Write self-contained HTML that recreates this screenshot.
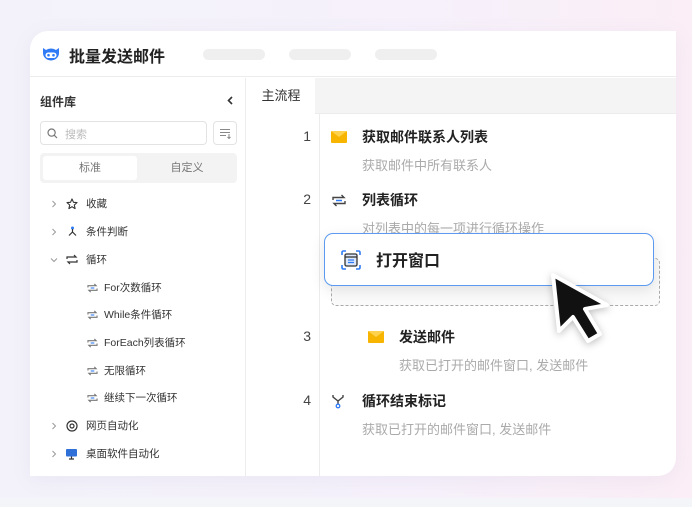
<!DOCTYPE html>
<html><head><meta charset="utf-8">
<style>
*{box-sizing:border-box;margin:0;padding:0}
body{width:692px;height:507px;overflow:hidden;position:relative;font-family:"Liberation Sans","Noto Sans CJK SC",sans-serif;background:linear-gradient(90deg,#f3f2fa 0%,#f6f1fb 60%,#fbeef6 100%)}
.bottom{position:absolute;left:0;top:498px;width:692px;height:9px;background:#f4f5f9}
.card{position:absolute;left:30px;top:31px;width:646px;height:445px;background:#fff;border-radius:18px 0 18px 0;box-shadow:0 4px 20px rgba(120,120,160,.08);overflow:hidden}
.hdr{position:absolute;left:0;top:0;width:646px;height:46px;border-bottom:1px solid #ececec}
.title{position:absolute;left:39px;top:12px;font-size:16px;font-weight:bold;color:#222}
.pill{position:absolute;top:18px;height:11px;border-radius:6px;background:#efefef}
.side{position:absolute;left:0;top:47px;width:216px;height:400px;border-right:1px solid #ececec}
.sh{position:absolute;left:10px;top:15px;font-size:12px;font-weight:bold;color:#333}
.search{position:absolute;left:10px;top:43px;width:167px;height:24px;border:1px solid #e3e3e3;border-radius:4px;font-size:11px;color:#bbb;padding:4px 0 0 24px}
.sbtn{position:absolute;left:183px;top:43px;width:24px;height:24px;border:1px solid #e3e3e3;border-radius:4px}
.seg{position:absolute;left:10px;top:75px;width:197px;height:30px;background:#f3f3f3;border-radius:4px}
.seg div{position:absolute;top:3px;height:24px;font-size:11px;color:#777;text-align:center;line-height:24px}
.row{position:absolute;height:16px;line-height:16px;white-space:nowrap;font-size:10.5px;color:#333}
.ch{position:absolute;left:20px}
.si{position:absolute;left:57px}
.main{position:absolute;left:217px;top:47px;width:429px;height:400px}
.tabs{position:absolute;left:0;top:0;width:429px;height:36px;background:#f4f4f4;border-bottom:1px solid #ececec}
.tab{position:absolute;left:0;top:0;width:68px;height:36px;background:#fff;font-size:13px;color:#333;line-height:36px;text-align:center}
.gut{position:absolute;left:72px;top:36px;width:1px;height:364px;background:#ececec}
.num{position:absolute;font-size:14px;color:#444;width:20px;text-align:right}
.st{position:absolute;font-size:14px;font-weight:bold;color:#222;white-space:nowrap}
.sd{position:absolute;font-size:13px;color:#aaa;white-space:nowrap}
</style></head><body>
<div class="bottom"></div>
<div class="card">
 <div class="hdr">
  <svg style="position:absolute;left:11px;top:15px" width="20" height="17" viewBox="0 0 20 17"><path d="M2 2 L5 4 A8 7 0 0 1 15 4 L18 2 L18 7 A8 7.5 0 1 1 2 7 Z" fill="#2f7bf5"/><rect x="4.5" y="6.5" width="11" height="5.5" rx="2.7" fill="#fff"/><circle cx="7.5" cy="9.2" r="1.3" fill="#2f7bf5"/><circle cx="12.5" cy="9.2" r="1.3" fill="#2f7bf5"/></svg>
  <div class="title">批量发送邮件</div>
  <div class="pill" style="left:173px;width:62px"></div>
  <div class="pill" style="left:259px;width:62px"></div>
  <div class="pill" style="left:345px;width:62px"></div>
 </div>
 <div class="side">
  <div class="sh">组件库</div>
  <svg style="position:absolute;left:197px;top:18px" width="6" height="9" viewBox="0 0 6 9"><path d="M5 1L1.5 4.5L5 8" stroke="#333" stroke-width="1.6" fill="none"/></svg>
  <div class="search">搜索</div>
  <svg style="position:absolute;left:17px;top:50px" width="11" height="11" viewBox="0 0 11 11"><circle cx="4.6" cy="4.6" r="3.6" fill="none" stroke="#777" stroke-width="1.2"/><path d="M7.3 7.3L10 10" stroke="#777" stroke-width="1.2"/></svg>
  <div class="sbtn"><svg style="position:absolute;left:6px;top:6px" width="12" height="11" viewBox="0 0 12 11"><path d="M0 1.5H10M0 4.5H10M0 7.5H6M9 6V10.5M7.5 9L9 10.5 10.5 9" stroke="#888" fill="none" stroke-width="1"/></svg></div>
  <div class="seg"><div style="left:3px;width:94px;background:#fff;border-radius:3px">标准</div><div style="left:100px;width:94px">自定义</div></div>

  <svg class="ch" style="top:122px" width="8" height="8" viewBox="0 0 8 8"><path d="M2.5 1L5.5 4L2.5 7" stroke="#999" fill="none"/></svg>
  <svg style="position:absolute;left:36px;top:120px" width="12" height="12" viewBox="0 0 12 12"><path d="M6 1L7.5 4.3L11 4.6L8.3 7L9.1 10.6L6 8.7L2.9 10.6L3.7 7L1 4.6L4.5 4.3Z" fill="none" stroke="#333" stroke-width="1.1" stroke-linejoin="round"/></svg>
  <span class="row" style="left:56px;top:118px">收藏</span>

  <svg class="ch" style="top:150px" width="8" height="8" viewBox="0 0 8 8"><path d="M2.5 1L5.5 4L2.5 7" stroke="#999" fill="none"/></svg>
  <svg style="position:absolute;left:37px;top:148px" width="11" height="11" viewBox="0 0 11 11"><circle cx="5.5" cy="2" r="1.5" fill="#2f7bf5"/><path d="M5.5 3V6M5.5 6L2 9.5M5.5 6L9 9.5" stroke="#333" stroke-width="1.2" fill="none"/></svg>
  <span class="row" style="left:56px;top:146px">条件判断</span>

  <svg class="ch" style="top:178px" width="8" height="8" viewBox="0 0 8 8"><path d="M1 2.5L4 5.5L7 2.5" stroke="#999" fill="none"/></svg>
  <svg style="position:absolute;left:36px;top:176px" width="12" height="11" viewBox="0 0 12 11"><path d="M1 5V3H10L8 1M11 6V8H2L4 10" stroke="#333" stroke-width="1.2" fill="none"/></svg>
  <span class="row" style="left:56px;top:174px">循环</span>

  <svg class="si" style="top:205px" width="11" height="10" viewBox="0 0 12 11"><path d="M1 5V3H10L8 1M11 6V8H2L4 10" stroke="#777" stroke-width="1.2" fill="none"/><path d="M4 5.5H8" stroke="#2f7bf5" stroke-width="1.2"/></svg>
  <span class="row" style="left:74px;top:202px">For次数循环</span>
  <svg class="si" style="top:232px" width="11" height="10" viewBox="0 0 12 11"><path d="M1 5V3H10L8 1M11 6V8H2L4 10" stroke="#777" stroke-width="1.2" fill="none"/><path d="M4 5.5H8" stroke="#2f7bf5" stroke-width="1.2"/></svg>
  <span class="row" style="left:74px;top:229px">While条件循环</span>
  <svg class="si" style="top:260px" width="11" height="10" viewBox="0 0 12 11"><path d="M1 5V3H10L8 1M11 6V8H2L4 10" stroke="#777" stroke-width="1.2" fill="none"/><path d="M4 5.5H8" stroke="#2f7bf5" stroke-width="1.2"/></svg>
  <span class="row" style="left:74px;top:257px">ForEach列表循环</span>
  <svg class="si" style="top:288px" width="11" height="10" viewBox="0 0 12 11"><path d="M1 5V3H10L8 1M11 6V8H2L4 10" stroke="#777" stroke-width="1.2" fill="none"/><path d="M4 5.5H8" stroke="#2f7bf5" stroke-width="1.2"/></svg>
  <span class="row" style="left:74px;top:285px">无限循环</span>
  <svg class="si" style="top:315px" width="11" height="10" viewBox="0 0 12 11"><path d="M1 5V3H10L8 1M11 6V8H2L4 10" stroke="#777" stroke-width="1.2" fill="none"/><path d="M4 5.5H8" stroke="#2f7bf5" stroke-width="1.2"/></svg>
  <span class="row" style="left:74px;top:312px">继续下一次循环</span>

  <svg class="ch" style="top:344px" width="8" height="8" viewBox="0 0 8 8"><path d="M2.5 1L5.5 4L2.5 7" stroke="#999" fill="none"/></svg>
  <svg style="position:absolute;left:36px;top:342px" width="12" height="12" viewBox="0 0 12 12"><circle cx="6" cy="6" r="5" fill="none" stroke="#333" stroke-width="1.2"/><circle cx="6" cy="6" r="2" fill="none" stroke="#333" stroke-width="1.2"/></svg>
  <span class="row" style="left:56px;top:340px">网页自动化</span>

  <svg class="ch" style="top:372px" width="8" height="8" viewBox="0 0 8 8"><path d="M2.5 1L5.5 4L2.5 7" stroke="#999" fill="none"/></svg>
  <svg style="position:absolute;left:35px;top:370px" width="13" height="12" viewBox="0 0 13 12"><rect x="1" y="1" width="11" height="7.5" rx="1" fill="#2f6fd8"/><path d="M4 11H9M6.5 8.5V11" stroke="#333" stroke-width="1.2"/></svg>
  <span class="row" style="left:56px;top:368px">桌面软件自动化</span>
 </div>
 <div class="main">
  <div class="tabs"><div class="tab">主流程</div></div>
  <div class="gut"></div>
  <div class="num" style="left:44px;top:50px">1</div>
  <div style="position:absolute;left:84px;top:53px;width:16px;height:12px;background:#f7b500;border-radius:1px"><svg width="16" height="12" viewBox="0 0 16 12" style="position:absolute"><path d="M0 0L8 6L16 0" fill="#ffd24d"/></svg></div>
  <div class="st" style="left:115px;top:49px">获取邮件联系人列表</div>
  <div class="sd" style="left:115px;top:77px">获取邮件中所有联系人</div>
  <div class="num" style="left:44px;top:113px">2</div>
  <svg style="position:absolute;left:85px;top:116px" width="14" height="13" viewBox="0 0 14 13"><path d="M1 6V3.5H12L9.5 1M13 7V9.5H2L4.5 12" stroke="#444" stroke-width="1.4" fill="none"/><path d="M4 6.5H10" stroke="#2f7bf5" stroke-width="1.5"/></svg>
  <div class="st" style="left:115px;top:112px">列表循环</div>
  <div class="sd" style="left:115px;top:140px">对列表中的每一项进行循环操作</div>
  <div style="position:absolute;left:84px;top:180px;width:329px;height:48px;border:1px dashed #aaa;border-radius:5px;background:#fafafa"></div>
  <div class="num" style="left:44px;top:250px">3</div>
  <div style="position:absolute;left:121px;top:253px;width:16px;height:12px;background:#f7b500;border-radius:1px"><svg width="16" height="12" viewBox="0 0 16 12" style="position:absolute"><path d="M0 0L8 6L16 0" fill="#ffd24d"/></svg></div>
  <div class="st" style="left:152px;top:249px">发送邮件</div>
  <div class="sd" style="left:152px;top:277px">获取已打开的邮件窗口, 发送邮件</div>
  <div class="num" style="left:44px;top:314px">4</div>
  <svg style="position:absolute;left:84px;top:316px" width="14" height="15" viewBox="0 0 14 15"><path d="M2 1V3L7 7L12 3V1M7 7V10" stroke="#444" stroke-width="1.4" fill="none"/><circle cx="7" cy="12" r="1.8" fill="none" stroke="#2f7bf5" stroke-width="1.3"/></svg>
  <div class="st" style="left:115px;top:313px">循环结束标记</div>
  <div class="sd" style="left:115px;top:341px">获取已打开的邮件窗口, 发送邮件</div>
  <div style="position:absolute;left:77px;top:155px;width:330px;height:53px;background:#fff;border:1.5px solid #5b9af0;border-radius:9px;box-shadow:0 4px 14px rgba(0,0,0,.1)">
   <svg style="position:absolute;left:16px;top:16px" width="20" height="20" viewBox="0 0 20 20"><path d="M1 5V2.5Q1 1 2.5 1H5M15 1H17.5Q19 1 19 2.5V5M19 15V17.5Q19 19 17.5 19H15M5 19H2.5Q1 19 1 17.5V15" stroke="#2f7bf5" stroke-width="1.6" fill="none"/><rect x="4" y="4" width="12" height="12" rx="1.5" fill="#dbe8fb" stroke="#333" stroke-width="1.3"/><path d="M4 7H16" stroke="#333" stroke-width="1.3"/><path d="M7 10H13M7 12.5H13" stroke="#2f7bf5" stroke-width="1.2"/></svg>
   <div style="position:absolute;left:51px;top:13px;font-size:16px;font-weight:bold;color:#222">打开窗口</div>
  </div>
  <svg style="position:absolute;left:298px;top:189px;overflow:visible" width="80" height="80" viewBox="0 0 80 80"><path d="M8 8L14 64L28 50L43 74L55 67L40 42L62 38Z" fill="#111" stroke="#fff" stroke-width="4" stroke-linejoin="round" style="filter:drop-shadow(0 2px 4px rgba(0,0,0,.25))"/></svg>
 </div>
</div>
</body></html>
